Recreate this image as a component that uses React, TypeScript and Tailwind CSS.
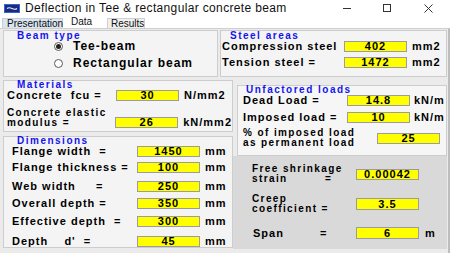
import type { ReactNode } from 'react'

const label = "font-bold text-[11px] tracking-[1px] leading-none text-black whitespace-pre"
const label2 = "font-bold text-[10px] tracking-[1.4px] leading-[10px] text-black whitespace-pre"

function Box({ value, className = '' }: { value: string; className?: string }) {
  return (
    <div
      className={`h-[11px] w-[63px] shrink-0 bg-[#ffff00] border border-[#9c9c9c] flex items-center justify-center text-[11px] font-bold tracking-[1px] leading-none text-black ${className}`}
    >
      {value}
    </div>
  )
}

function Title({ children, className = '' }: { children: ReactNode; className?: string }) {
  return (
    <div className={`h-[9px] leading-[9px] text-[10px] font-bold tracking-[1.5px] text-[#1414ee] ${className}`}>
      {children}
    </div>
  )
}

function Radio({ checked, text, className = '' }: { checked?: boolean; text: string; className?: string }) {
  return (
    <div className={`flex items-center h-[12px] ml-[50px] ${className}`}>
      <div className="w-[9px] h-[9px] rounded-full border border-[#5a5a5a] bg-white flex items-center justify-center">
        {checked && <div className="w-[5px] h-[5px] rounded-full bg-[#222]" />}
      </div>
      <span className="ml-[10px] font-bold text-[12px] leading-none tracking-[1px] text-black">{text}</span>
    </div>
  )
}

function WinIcon() {
  return (
    <svg width="16" height="9" viewBox="0 0 16 9">
      <rect x="0.5" y="0.5" width="15" height="8" fill="#1b2a7a" stroke="#2f63e0" />
      <path d="M3 4.5 Q5 3 8 4.5 T13 4.5" stroke="#e8eefc" strokeWidth="1.2" fill="none" />
    </svg>
  )
}

export default function App() {
  return (
    <div className="w-[450px] h-[253px] overflow-hidden bg-[#eeeeee] flex flex-col font-['Liberation_Sans',Arial,sans-serif]">
      {/* title bar */}
      <div className="h-[16px] bg-white flex items-center shrink-0">
        <div className="ml-[4px] flex items-center"><WinIcon /></div>
        <span className="ml-[5px] text-[12px] tracking-[0.35px] text-[#111]">Deflection in Tee &amp; rectangular concrete beam</span>
        <div className="flex-1" />
        <div className="w-[8px] h-[1px] bg-[#333] mr-[32px]" />
        <div className="w-[8px] h-[8px] border border-[#333] mr-[33px]" />
        <svg width="9" height="9" viewBox="0 0 9 9" className="mr-[17px]">
          <path d="M0.5 0.5 L8.5 8.5 M8.5 0.5 L0.5 8.5" stroke="#333" strokeWidth="1" />
        </svg>
      </div>

      {/* tabs */}
      <div className="h-[12px] bg-white flex items-end shrink-0 text-[10px] leading-none text-[#111]">
        <div className="ml-[2px] h-[10px] w-[61px] bg-[#d9e6f2] border border-b-0 border-[#c4cfd9] flex items-center pl-[4px]">Presentation</div>
        <div className="h-[12px] w-[42px] bg-white flex items-center pl-[8px]">Data</div>
        <div className="ml-[2px] h-[10px] w-[38px] bg-[#f0f0f0] border border-b-0 border-[#cfcfcf] flex items-center pl-[3px]">Results</div>
      </div>

      {/* content */}
      <div className="flex-1 border-t border-r-2 border-[#cfcfcf] border-r-[#bdbdbd] bg-[#ebebeb]">
        {/* row 1 */}
        <div className="flex mt-[1px]">
          <div className="ml-[3px] w-[215px] h-[47px] border border-[#cdcdcd] bg-[#f4f4f4]">
            <Title className="ml-[13px]">Beam type</Title>
            <Radio checked text="Tee-beam" className="mt-[0px]" />
            <Radio text="Rectangular beam" className="mt-[5px]" />
          </div>
          <div className="ml-[2px] w-[227px] h-[47px] border border-[#cdcdcd] bg-[#f4f4f4]">
            <Title className="ml-[9px]">Steel areas</Title>
            <div className="flex items-center h-[11px] mt-[1px] pl-[1px]">
              <span className={`${label} w-[122px]`}>Compression steel</span>
              <Box value="402" />
              <span className={`${label} ml-[5px]`}>mm2</span>
            </div>
            <div className="flex items-center h-[11px] mt-[5px] pl-[1px]">
              <span className={`${label} w-[122px]`}>Tension steel =</span>
              <Box value="1472" />
              <span className={`${label} ml-[5px]`}>mm2</span>
            </div>
          </div>
        </div>

        {/* row 2 */}
        <div className="flex mt-[3px]">
          {/* left column */}
          <div className="ml-[3px] w-[230px] flex flex-col">
            <div className="h-[52px] border border-[#cdcdcd] bg-[#f4f4f4]">
              <Title className="ml-[13px] -mt-[1px] text-[#2a2ab4]">Materials</Title>
              <div className="flex items-center h-[11px] mt-[1px] pl-[3px]">
                <span className={`${label} w-[109px]`}>Concrete  fcu =</span>
                <Box value="30" />
                <span className={`${label} ml-[5px]`}>N/mm2</span>
              </div>
              <div className="flex items-end h-[21px] mt-[6px] pl-[3px]">
                <span className={`${label2} w-[109px]`}>{'Concrete elastic\nmodulus ='}</span>
                <Box value="26" />
                <span className={`${label} ml-[5px]`}>kN/mm2</span>
              </div>
            </div>
            <div className="mt-[4px] h-[112px] border border-[#cdcdcd] bg-[#f4f4f4]">
              <Title className="ml-[13px] -mt-[1px]">Dimensions</Title>
              {[
                ['Flange width  =', '1450', 'mt-[1px]'],
                ['Flange thickness =', '100', 'mt-[5px]'],
                ['Web width     =', '250', 'mt-[8px]'],
                ['Overall depth =', '350', 'mt-[6px]'],
                ['Effective depth  =', '300', 'mt-[7px]'],
                ["Depth    d'  =", '45', 'mt-[9px]'],
              ].map(([t, v, m]) => (
                <div key={t} className={`flex items-center h-[11px] pl-[8px] ${m}`}>
                  <span className={`${label} w-[125px]`}>{t}</span>
                  <Box value={v} />
                  <span className={`${label} ml-[5px]`}>mm</span>
                </div>
              ))}
            </div>
          </div>

          {/* right column */}
          <div className="w-[214px] flex flex-col">
            <div className="ml-[4px] mt-[5px] h-[71px] border border-[#cdcdcd] bg-[#f6f6f6]">
              <Title className="ml-[8px] -mt-[1px]">Unfactored loads</Title>
              <div className="flex items-center h-[11px] mt-[1px] pl-[5px]">
                <span className={`${label} w-[104px]`}>Dead Load =</span>
                <Box value="14.8" />
                <span className={`${label} ml-[4px]`}>kN/m</span>
              </div>
              <div className="flex items-center h-[11px] mt-[6px] pl-[5px]">
                <span className={`${label} w-[104px]`}>Imposed load =</span>
                <Box value="10" />
                <span className={`${label} ml-[4px]`}>kN/m</span>
              </div>
              <div className="flex items-center h-[20px] mt-[5px] pl-[5px]">
                <span className={`${label2} w-[134px]`}>{'% of imposed load\nas permanent load'}</span>
                <Box value="25" className="w-[62px]" />
              </div>
            </div>
            <div className="h-[93px] bg-[#d9d9d9] pt-[8px] pl-[19px]">
              <div className="flex items-center">
                <div className={`${label2} w-[104px]`}>
                  <div>Free shrinkage</div>
                  <div><span className="inline-block w-[73px]">strain</span>=</div>
                </div>
                <Box value="0.00042" className="tracking-[1.5px]" />
              </div>
              <div className="flex items-center mt-[10px]">
                <div className={`${label2} w-[104px]`}>
                  <div>Creep</div>
                  <div>coefficient =</div>
                </div>
                <Box value="3.5" className="h-[12px]" />
              </div>
              <div className="flex items-center mt-[13px] h-[12px]">
                <div className={`${label} w-[104px] pl-[1px]`}>
                  <span className="inline-block w-[67px]">Span</span>=
                </div>
                <Box value="6" className="h-[12px]" />
                <span className={`${label} ml-[6px]`}>m</span>
              </div>
            </div>
          </div>
        </div>
      </div>
    </div>
  )
}
